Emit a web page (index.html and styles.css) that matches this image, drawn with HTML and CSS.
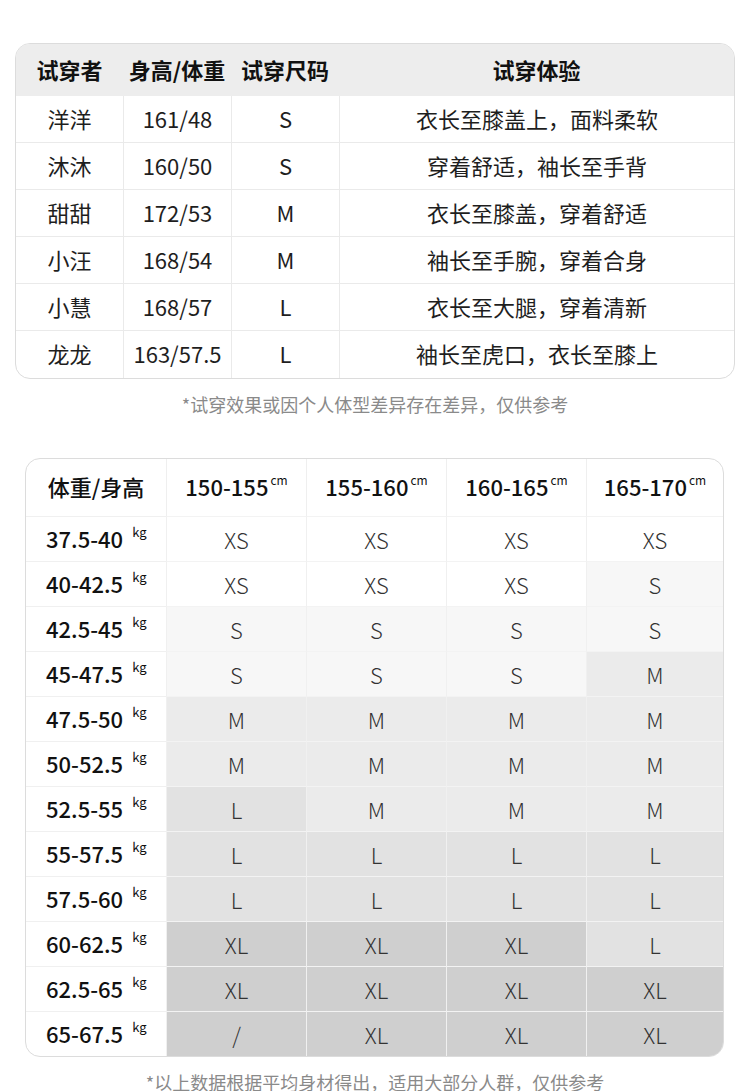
FILE: index.html
```html
<!DOCTYPE html>
<html lang="zh">
<head>
<meta charset="utf-8">
<link rel="stylesheet" href="styles.css">
</head>
<body>
<div class="page">
  <div class="tryon">
    <div class="th">试穿者</div><div class="th">身高/体重</div><div class="th">试穿尺码</div><div class="th">试穿体验</div>
    <div class="td">洋洋</div><div class="td">161/48</div><div class="td">S</div><div class="td">衣长至膝盖上，面料柔软</div>
    <div class="td">沐沐</div><div class="td">160/50</div><div class="td">S</div><div class="td">穿着舒适，袖长至手背</div>
    <div class="td">甜甜</div><div class="td">172/53</div><div class="td">M</div><div class="td">衣长至膝盖，穿着舒适</div>
    <div class="td">小汪</div><div class="td">168/54</div><div class="td">M</div><div class="td">袖长至手腕，穿着合身</div>
    <div class="td">小慧</div><div class="td">168/57</div><div class="td">L</div><div class="td">衣长至大腿，穿着清新</div>
    <div class="td last">龙龙</div><div class="td last">163/57.5</div><div class="td last">L</div><div class="td last">袖长至虎口，衣长至膝上</div>
  </div>
  <p class="note">*试穿效果或因个人体型差异存在差异，仅供参考</p>

  <div class="size">
    <div class="sh first">体重/身高</div>
    <div class="sh">150-155<span class="cm">cm</span></div>
    <div class="sh">155-160<span class="cm">cm</span></div>
    <div class="sh">160-165<span class="cm">cm</span></div>
    <div class="sh">165-170<span class="cm">cm</span></div>

    <div class="lbl">37.5-40<span class="kg">kg</span></div>
    <div class="c xs">XS</div><div class="c xs">XS</div><div class="c xs">XS</div><div class="c xs">XS</div>

    <div class="lbl">40-42.5<span class="kg">kg</span></div>
    <div class="c xs">XS</div><div class="c xs">XS</div><div class="c xs">XS</div><div class="c s">S</div>

    <div class="lbl">42.5-45<span class="kg">kg</span></div>
    <div class="c s">S</div><div class="c s">S</div><div class="c s">S</div><div class="c s">S</div>

    <div class="lbl">45-47.5<span class="kg">kg</span></div>
    <div class="c s">S</div><div class="c s">S</div><div class="c s">S</div><div class="c m">M</div>

    <div class="lbl">47.5-50<span class="kg">kg</span></div>
    <div class="c m">M</div><div class="c m">M</div><div class="c m">M</div><div class="c m">M</div>

    <div class="lbl">50-52.5<span class="kg">kg</span></div>
    <div class="c m">M</div><div class="c m">M</div><div class="c m">M</div><div class="c m">M</div>

    <div class="lbl">52.5-55<span class="kg">kg</span></div>
    <div class="c l">L</div><div class="c m">M</div><div class="c m">M</div><div class="c m">M</div>

    <div class="lbl">55-57.5<span class="kg">kg</span></div>
    <div class="c l">L</div><div class="c l">L</div><div class="c l">L</div><div class="c l">L</div>

    <div class="lbl">57.5-60<span class="kg">kg</span></div>
    <div class="c l">L</div><div class="c l">L</div><div class="c l">L</div><div class="c l">L</div>

    <div class="lbl">60-62.5<span class="kg">kg</span></div>
    <div class="c xl">XL</div><div class="c xl">XL</div><div class="c xl">XL</div><div class="c l">L</div>

    <div class="lbl">62.5-65<span class="kg">kg</span></div>
    <div class="c xl">XL</div><div class="c xl">XL</div><div class="c xl">XL</div><div class="c xl">XL</div>

    <div class="lbl">65-67.5<span class="kg">kg</span></div>
    <div class="c xl">/</div><div class="c xl">XL</div><div class="c xl">XL</div><div class="c xl">XL</div>
  </div>
  <p class="note">*以上数据根据平均身材得出，适用大部分人群，仅供参考</p>
</div>
</body>
</html>
```

FILE: styles.css
```css
* { box-sizing: border-box; }
html, body {
  margin: 0;
  padding: 0;
  background: #ffffff;
}
body {
  font-family: "Noto Sans CJK SC", "Noto Sans", sans-serif;
  color: #222;
}
.page {
  padding-top: 43px;
  display: flex;
  flex-direction: column;
  align-items: flex-start;
}

/* try-on table */
.tryon {
  margin-left: 15px;
  width: 720px;
  border: 1px solid #dcdcdc;
  border-radius: 15px;
  overflow: hidden;
  display: grid;
  grid-template-columns: 107px 108px 108px 1fr;
  grid-template-rows: 52px repeat(6, 47px);
}
.th, .td {
  display: flex;
  align-items: center;
  justify-content: center;
  font-size: 22px;
  line-height: 1;
  white-space: nowrap;
  padding-bottom: 3px;
}
.th {
  background: #ededed;
  font-weight: 700;
  color: #111;
}
.td {
  font-weight: 400;
  color: #1e1e1e;
  border-bottom: 1px solid #eaeaea;
}
.td.last { border-bottom: none; }
.td:not(:nth-child(4n+1)) { border-left: 1px solid #eaeaea; }

.note {
  align-self: center;
  margin: 12px 0 0;
  font-size: 18px;
  line-height: 26px;
  color: #8a8a8a;
  font-weight: 400;
  white-space: nowrap;
}

/* size table */
.size {
  margin-top: 41px;
  margin-left: 25px;
  width: 699px;
  border: 1px solid #dcdcdc;
  border-radius: 15px;
  overflow: hidden;
  display: grid;
  grid-template-columns: 140px 140px 140px 140px 1fr;
  grid-template-rows: 57px repeat(12, 45px);
}
.sh, .lbl, .c {
  display: flex;
  align-items: center;
  font-size: 22px;
  line-height: 1;
  white-space: nowrap;
}
.sh {
  justify-content: center;
  font-weight: 500;
  color: #111;
  border-left: 1px solid #efefef;
  padding-bottom: 3px;
}
.sh.first { border-left: none; }
.lbl {
  padding-left: 20px;
  font-weight: 500;
  color: #111;
  border-top: 1px solid #f0f0f0;
  padding-bottom: 3px;
}
.c {
  justify-content: center;
  font-weight: 300;
  color: #333;
  border-top: 1px solid #f3f3f3;
  border-left: 1px solid #f0f0f0;
  padding-bottom: 1px;
}
.cm {
  font-size: 12px;
  font-weight: 400;
  margin-left: 2px;
  position: relative;
  top: -6px;
}
.kg {
  font-size: 13px;
  font-weight: 400;
  margin-left: 9px;
  position: relative;
  top: -6px;
}
.xs { background: #ffffff; }
.s  { background: #f7f7f7; }
.m  { background: #ebebeb; }
.l  { background: #e2e2e2; }
.xl { background: #cfcfcf; }
```
